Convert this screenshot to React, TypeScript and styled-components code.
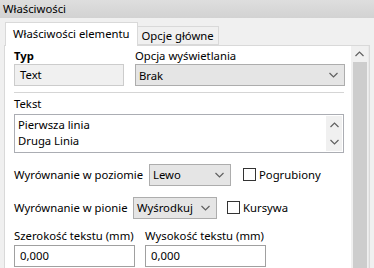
import React from 'react'
import styled, { createGlobalStyle } from 'styled-components'

const Global = createGlobalStyle`
  html, body {
    margin: 0;
    padding: 0;
    background: #f0f0f0;
  }
  body {
    font-family: 'Noto Sans', 'Open Sans', sans-serif;
    font-size: 11.3px;
    color: #000;
  }
`

const Window = styled.div`
  width: 374px;
  height: 268px;
  overflow: hidden;
  background: #f0f0f0;
  display: flex;
  flex-direction: column;
`

const TitleBar = styled.div`
  height: 18px;
  line-height: 18px;
  padding-left: 3px;
  background: linear-gradient(#dedede, #d2d2d2);
  flex: none;
`

const TabStrip = styled.div`
  display: flex;
  align-items: flex-end;
  margin-top: 4px;
  padding-left: 5px;
  height: 23px;
  flex: none;
  position: relative;
  z-index: 1;
`

const Tab = styled.div<{ $active?: boolean }>`
  box-sizing: border-box;
  height: ${(p) => (p.$active ? '24px' : '19px')};
  padding: 0 ${(p) => (p.$active ? '7px' : '4px')};
  line-height: ${(p) => (p.$active ? '22px' : '18px')};
  border: 1px solid #d9d9d9;
  border-bottom: ${(p) => (p.$active ? 'none' : '1px solid #d9d9d9')};
  border-left: ${(p) => (p.$active ? '1px solid #d9d9d9' : 'none')};
  background: ${(p) => (p.$active ? '#fff' : '#f0f0f0')};
  margin-bottom: ${(p) => (p.$active ? '-1px' : '0')};
  white-space: nowrap;
`

const Panel = styled.div`
  margin-left: 4px;
  width: 366px;
  flex: 1;
  border: 1px solid #d9d9d9;
  border-bottom: none;
  box-sizing: border-box;
  display: flex;
  background: #fff;
  min-height: 0;
`

const Content = styled.div`
  flex: 1;
  padding: 2px 7px 0 9px;
  overflow: hidden;
`

const Scrollbar = styled.div`
  width: 17px;
  background: #f0f0f0;
  display: flex;
  flex-direction: column;
  align-items: center;
  border-right: 1px solid #e9e9e9;
`

const ScrollArrow = styled.div`
  height: 16px;
  width: 100%;
  display: flex;
  align-items: center;
  justify-content: center;
  flex: none;
`

const Thumb = styled.div`
  width: 14px;
  flex: 1;
  background: #cdcdcd;
`

const TopGrid = styled.div`
  display: grid;
  grid-template-columns: 110px 210px;
  column-gap: 11px;
  row-gap: 0;
`

const Label = styled.div<{ $bold?: boolean }>`
  line-height: 15px;
  height: 15px;
  font-weight: ${(p) => (p.$bold ? 700 : 400)};
  white-space: nowrap;
`

const ReadOnlyBox = styled.div`
  box-sizing: border-box;
  height: 22px;
  margin-top: 1px;
  border: 1px solid #cccccc;
  background: #f0f0f0;
  padding-left: 5px;
  line-height: 20px;
`

const Select = styled.div<{ $width?: number }>`
  box-sizing: border-box;
  height: 22px;
  margin-top: 1px;
  width: ${(p) => (p.$width ? `${p.$width}px` : 'auto')};
  border: 1px solid #adadad;
  background: #e5e5e5;
  padding: 0 6px 0 3px;
  display: flex;
  align-items: center;
  justify-content: space-between;
  flex: none;
`

const Separator = styled.div`
  height: 1px;
  background: #d5d5d5;
  margin: 6px 0 3px;
`

const TextArea = styled.div`
  box-sizing: border-box;
  height: 39px;
  margin-top: 3px;
  border: 1px solid #abadb3;
  display: flex;
`

const TextLines = styled.div`
  flex: 1;
  padding: 2px 0 0 3px;
  line-height: 16px;
`

const MiniScroll = styled.div`
  width: 16px;
  margin: 1px;
  background: #f0f0f0;
  display: flex;
  flex-direction: column;
  justify-content: space-around;
  align-items: center;
`

const Row = styled.div<{ $top: number }>`
  display: flex;
  align-items: center;
  margin-top: ${(p) => p.$top}px;
  height: 22px;
`

const RowLabel = styled.div<{ $width: number }>`
  width: ${(p) => p.$width}px;
  flex: none;
  white-space: nowrap;
`

const Check = styled.label<{ $gap: number }>`
  display: flex;
  align-items: center;
  margin-left: ${(p) => p.$gap}px;
  white-space: nowrap;
`

const Box = styled.span`
  box-sizing: border-box;
  width: 13px;
  height: 13px;
  border: 1px solid #333;
  background: #fff;
  margin-right: 3px;
`

const SizeGrid = styled.div`
  display: grid;
  grid-template-columns: 121px 121px;
  column-gap: 10px;
  margin-top: 10px;
`

const Input = styled.div`
  box-sizing: border-box;
  height: 22px;
  margin-top: 2px;
  border: 1px solid #a0a0a0;
  padding-left: 5px;
  line-height: 20px;
`

const Chevron: React.FC<{ up?: boolean; color?: string }> = ({ up, color = '#606060' }) => (
  <svg width="9" height="6" viewBox="0 0 9 6">
    <path
      d={up ? 'M0.5 5 L4.5 1 L8.5 5' : 'M0.5 1 L4.5 5 L8.5 1'}
      fill="none"
      stroke={color}
      strokeWidth="1.2"
    />
  </svg>
)

const App: React.FC = () => {
  return (
    <Window>
      <Global />
      <TitleBar>Właściwości</TitleBar>
      <TabStrip>
        <Tab $active>Właściwości elementu</Tab>
        <Tab>Opcje główne</Tab>
      </TabStrip>
      <Panel>
        <Content>
          <TopGrid>
            <Label $bold>Typ</Label>
            <Label>Opcja wyświetlania</Label>
            <ReadOnlyBox>Text</ReadOnlyBox>
            <Select>
              <span>Brak</span>
              <Chevron />
            </Select>
          </TopGrid>
          <Separator />
          <Label>Tekst</Label>
          <TextArea>
            <TextLines>
              Pierwsza linia
              <br />
              Druga Linia
            </TextLines>
            <MiniScroll>
              <Chevron up />
              <Chevron />
            </MiniScroll>
          </TextArea>
          <Row $top={10}>
            <RowLabel $width={135}>Wyrównanie w poziomie</RowLabel>
            <Select $width={82}>
              <span>Lewo</span>
              <Chevron />
            </Select>
            <Check $gap={12}>
              <Box />
              Pogrubiony
            </Check>
          </Row>
          <Row $top={11}>
            <RowLabel $width={119}>Wyrównanie w pionie</RowLabel>
            <Select $width={84}>
              <span>Wyśrodkuj</span>
              <Chevron />
            </Select>
            <Check $gap={10}>
              <Box />
              Kursywa
            </Check>
          </Row>
          <SizeGrid>
            <Label>Szerokość tekstu (mm)</Label>
            <Label>Wysokość tekstu (mm)</Label>
            <Input>0,000</Input>
            <Input>0,000</Input>
          </SizeGrid>
        </Content>
        <Scrollbar>
          <ScrollArrow>
            <Chevron up />
          </ScrollArrow>
          <Thumb />
        </Scrollbar>
      </Panel>
    </Window>
  )
}

export default App
